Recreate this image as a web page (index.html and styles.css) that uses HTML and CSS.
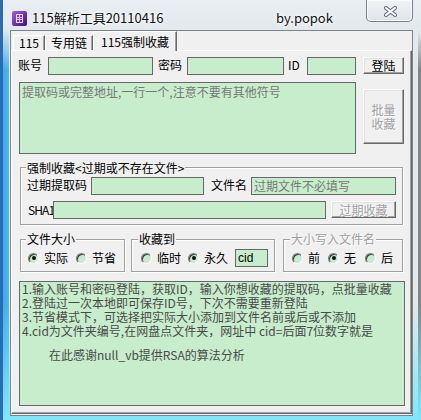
FILE: index.html
```html
<!DOCTYPE html>
<html lang="zh-CN">
<head>
<meta charset="utf-8">
<title>115解析工具20110416</title>
<link rel="stylesheet" href="styles.css">
</head>
<body>
<div class="window">
  <div class="titlebar">
    <svg class="app-icon" width="15" height="15" viewBox="0 0 15 15">
      <defs>
        <linearGradient id="ig" x1="0" y1="0" x2="1" y2="1">
          <stop offset="0" stop-color="#a65be6"/>
          <stop offset="1" stop-color="#3c0a86"/>
        </linearGradient>
      </defs>
      <rect x="0" y="0" width="15" height="15" rx="2" fill="url(#ig)"/>
      <rect x="4.5" y="3.5" width="6" height="8" fill="none" stroke="#eadcff" stroke-width="1"/>
      <path d="M5 6.5h5M5 8.5h5M7.5 4v7" stroke="#d6c2ff" stroke-width="1"/>
    </svg>
    <span class="title">115解析工具20110416</span>
    <span class="by">by.popok</span>
    <div class="close">
      <svg width="13" height="11" viewBox="0 0 13 11">
        <path d="M2 2L11 9M11 2L2 9" stroke="#5d6873" stroke-width="4" stroke-linecap="square"/>
        <path d="M2 2L11 9M11 2L2 9" stroke="#f5f7f8" stroke-width="2" stroke-linecap="square"/>
      </svg>
    </div>
  </div>
  <div class="client">
    <div class="tabs">
      <div class="tab t1">115</div>
      <div class="tab t2">专用链</div>
      <div class="tab active">115强制收藏</div>
    </div>
    <div class="panel">
      <div class="row row-login">
        <span class="lbl l-acct">账号</span>
        <div class="field f-acct"></div>
        <span class="lbl l-pwd">密码</span>
        <div class="field f-pwd"></div>
        <span class="lbl l-id">ID</span>
        <div class="field f-id"></div>
        <div class="btn b-login">登陆</div>
      </div>
      <div class="row row-batch">
        <div class="field f-codes"><span class="hint">提取码或完整地址,一行一个,注意不要有其他符号</span></div>
        <div class="btn disabled b-batch">批量<br>收藏</div>
      </div>
      <fieldset class="group g-force">
        <legend>强制收藏&lt;过期或不存在文件&gt;</legend>
        <div class="row row-exp">
          <span class="lbl l-exp">过期提取码</span>
          <div class="field f-exp"></div>
          <span class="lbl l-fname">文件名</span>
          <div class="field f-fname"><span class="hint">过期文件不必填写</span></div>
        </div>
        <div class="row row-sha">
          <span class="lbl l-sha">SHA1</span>
          <div class="field f-sha"></div>
          <div class="btn disabled b-exp">过期收藏</div>
        </div>
      </fieldset>
      <div class="groups">
        <fieldset class="group g-size">
          <legend>文件大小</legend>
          <div class="radios">
            <div class="radio r-first"><span class="dot on"></span>实际</div>
            <div class="radio"><span class="dot"></span>节省</div>
          </div>
        </fieldset>
        <fieldset class="group g-fav">
          <legend>收藏到</legend>
          <div class="radios">
            <div class="radio r-first"><span class="dot"></span>临时</div>
            <div class="radio r-perm"><span class="dot on"></span>永久</div>
            <div class="field f-cid">cid</div>
          </div>
        </fieldset>
        <fieldset class="group g-name">
          <legend class="legend-off">大小写入文件名</legend>
          <div class="radios">
            <div class="radio r-first"><span class="dot"></span>前</div>
            <div class="radio r-mid"><span class="dot on"></span>无</div>
            <div class="radio r-last"><span class="dot"></span>后</div>
          </div>
        </fieldset>
      </div>
      <div class="field memo">
        <div class="notes">1.输入账号和密码登陆，获取ID，输入你想收藏的提取码，点批量收藏<br>2.登陆过一次本地即可保存ID号，下次不需要重新登陆<br>3.节省模式下，可选择把实际大小添加到文件名前或后或不添加<br>4.cid为文件夹编号,在网盘点文件夹，网址中 cid=后面7位数字就是</div>
        <div class="thanks">在此感谢null_vb提供RSA的算法分析</div>
      </div>
    </div>
  </div>
</div>
</body>
</html>
```
FILE: styles.css
```css
* {
  box-sizing: border-box;
}

html, body {
  margin: 0;
  padding: 0;
}

body {
  width: 421px;
  height: 420px;
  overflow: hidden;
  font-family: "Noto Sans CJK SC", "Noto Sans", sans-serif;
  font-size: 12px;
  color: #000;
  background: #dfe8ec;
}

.window {
  width: 421px;
  height: 420px;
  display: flex;
  flex-direction: column;
  background:
    linear-gradient(to right, #2a6cb4 0, #2a6cb4 3px, rgba(0,0,0,0) 3px),
    linear-gradient(to bottom, #e8eef1 0, #e2e9ed 30px, rgba(226,233,237,0) 70px),
    linear-gradient(to bottom, rgba(0,0,0,0) 300px, #7fe6fb 420px),
    linear-gradient(to right, #3aa2e6 0, #45b8f2 9px, #eef3f5 9px, #eef3f5 413px, #e6e9eb 413px, #e6e9eb 418px, #80868a 418px);
}

/* ---------- title bar ---------- */
.titlebar {
  height: 30px;
  display: flex;
  align-items: center;
  padding: 6px 8px 0 12px;
}

.app-icon {
  flex: none;
}

.title {
  flex: 1;
  margin-left: 5px;
  font-size: 13px;
  line-height: 16px;
  color: #111;
  white-space: nowrap;
  text-shadow: 0 0 6px #fff, 0 0 3px #fff;
}

.by {
  width: 90px;
  font-size: 13px;
  line-height: 16px;
  color: #111;
  text-shadow: 0 0 6px #fff, 0 0 3px #fff;
}

.close {
  align-self: flex-start;
  margin-top: -6px;
  width: 47px;
  height: 22px;
  border: 1px solid #76818b;
  border-top: none;
  border-radius: 0 0 5px 5px;
  background: linear-gradient(to bottom, #f1f4f6, #dde4e8);
  box-shadow: inset 0 0 0 1px rgba(255,255,255,0.75);
  display: flex;
  align-items: center;
  justify-content: center;
  padding: 2px 0 0 1px;
}

/* ---------- client ---------- */
.client {
  margin-left: 10px;
  width: 403px;
  height: 386px;
  border: 1px solid #7a858d;
  background: #f0f0f0;
  display: flex;
  flex-direction: column;
}

.tabs {
  height: 19px;
  display: flex;
  align-items: flex-end;
  padding-left: 2px;
}

.tab {
  height: 15px;
  border: 1px solid;
  border-color: #fff #696969 transparent #fff;
  border-bottom: none;
  box-shadow: inset -1px 0 0 #a0a0a0;
  text-align: center;
  font-size: 12px;
  line-height: 14px;
  white-space: nowrap;
}

.t1 {
  width: 32px;
}

.t2 {
  width: 48px;
}

.tab.active {
  width: 84px;
  height: 20px;
  margin-bottom: -1px;
  padding-top: 3px;
  background: #f0f0f0;
  position: relative;
  z-index: 1;
}

.panel {
  width: 401px;
  height: 364px;
  border: 1px solid;
  border-color: #fff #696969 #696969 #fff;
  box-shadow: inset -1px -1px 0 #a0a0a0;
}

.row {
  display: flex;
  align-items: flex-start;
}

.lbl {
  line-height: 14px;
  white-space: nowrap;
  flex: none;
}

.field {
  flex: none;
  height: 18px;
  background: #c7edcc;
  border: 1px solid #686868;
}

.hint {
  color: #777;
  white-space: nowrap;
}

.btn {
  flex: none;
  display: flex;
  align-items: center;
  justify-content: center;
  text-align: center;
  background: #f0f0f0;
  border: 1px solid;
  border-color: #fff #696969 #696969 #fff;
  box-shadow: inset -1px -1px 0 #a0a0a0, inset 1px 1px 0 #e3e3e3;
  line-height: 13px;
  white-space: nowrap;
}

.btn.disabled {
  color: #a0a0a0;
  text-shadow: 1px 1px 0 #fff;
}

/* row: login */
.row-login {
  margin-top: 6px;
  padding-left: 6px;
  height: 18px;
}

.l-acct { width: 30px; margin-top: 1px; }
.f-acct { width: 105px; }
.l-pwd { width: 29px; margin-left: 5px; margin-top: 1px; }
.f-pwd { width: 97px; }
.l-id { width: 19px; margin-left: 4px; margin-top: 1px; }
.f-id { width: 49px; }
.b-login { width: 41px; height: 17px; margin-left: 7px; }

/* row: batch */
.row-batch {
  margin-top: 7px;
  padding-left: 7px;
}

.f-codes {
  width: 337px;
  height: 72px;
  padding: 2px 0 0 2px;
  line-height: 13px;
}

.b-batch {
  width: 41px;
  height: 55px;
  margin: 7px 0 0 7px;
  line-height: 14px;
}

/* ---------- group boxes ---------- */
.group {
  margin: 0;
  min-width: 0;
  border: 1px solid #a0a0a0;
  box-shadow: inset 1px 1px 0 #fff, 1px 1px 0 #fff;
}

.group legend {
  padding: 0 1px;
  margin: 0;
  font-size: 12px;
  background: #f0f0f0;
}

.g-force {
  margin: 7px 0 0 8px;
  width: 383px;
  padding: 3px 5px 5px 5px;
}

.g-force legend {
  line-height: 13px;
}

.row-exp {
  height: 18px;
}

.l-exp { width: 64px; margin: 1px 0 0 1px; }
.f-exp { width: 113px; }
.l-fname { width: 40px; margin: 1px 0 0 7px; }
.f-fname { width: 145px; padding-left: 2px; line-height: 16px; }

.row-sha {
  margin-top: 6px;
  height: 18px;
}

.l-sha {
  width: 25px;
  margin: 2px 0 0 2px;
  letter-spacing: -0.9px;
}

.f-sha { width: 273px; }
.b-exp { width: 65px; height: 17px; margin-left: 5px; }

.groups {
  display: flex;
  align-items: flex-start;
  margin: 7px 0 0 8px;
}

.groups .group {
  padding: 3px 5px 4px 6px;
}

.groups .group legend {
  line-height: 14px;
}

.g-size { width: 105px; padding-left: 5px !important; }
.g-fav { width: 144px; margin-left: 6px; }
.g-name { width: 120px; margin-left: 8px; }

.legend-off {
  color: #a0a0a0;
  text-shadow: 1px 1px 0 #fff;
}

.radios {
  display: flex;
  align-items: center;
  height: 18px;
}

.radio {
  display: flex;
  align-items: center;
  line-height: 14px;
  white-space: nowrap;
  margin-left: 8px;
}

.g-size .r-first { margin-left: 2px; }
.g-fav .r-first { margin-left: 3px; }
.g-fav .r-perm { margin-left: 7px; }
.g-name .r-first { margin-left: 2px; }
.g-name .r-last { margin-left: 9px; }

.dot {
  width: 11px;
  height: 11px;
  margin-right: 5px;
  border-radius: 50%;
  border: 1px solid;
  border-color: #7a7a7a #fff #fff #7a7a7a;
  background: #c7edcc;
  box-shadow: inset 1px 1px 0 #3c3c3c;
  display: flex;
  align-items: center;
  justify-content: center;
}

.dot.on::after {
  content: "";
  width: 4px;
  height: 4px;
  border-radius: 50%;
  background: #111;
}

.f-cid {
  width: 33px;
  margin-left: 7px;
  padding-left: 2px;
  line-height: 16px;
  font-family: "Liberation Sans", "Noto Sans CJK SC", sans-serif;
}

/* ---------- memo ---------- */
.memo {
  margin: 9px 0 0 7px;
  width: 386px;
  height: 125px;
  padding: 0 0 0 2px;
  line-height: 14px;
  color: #4a4a4a;
  white-space: nowrap;
}

.memo .thanks {
  margin-top: 10px;
  padding-left: 27px;
}
```
